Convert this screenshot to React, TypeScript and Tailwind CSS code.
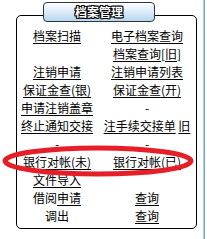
import React from 'react';

type Cell = React.ReactNode;

const U = ({ children }: { children: React.ReactNode }) => (
  <span className="underline underline-offset-[2px] decoration-black">{children}</span>
);

const rows: [Cell, Cell][] = [
  [<U>档案扫描</U>, <U>电子档案查询</U>],
  [null, <><U>档案查询</U>[<U>旧</U>]</>],
  [<U>注销申请</U>, <U>注销申请列表</U>],
  [<U>保证金查(银)</U>, <U>保证金查(开)</U>],
  [<U>申请注销盖章</U>, '-'],
  [<U>终止通知交接</U>, <><U>注手续交接单</U> <U>旧</U></>],
  ['-', '-'],
  [<U>银行对帐(未)</U>, <U>银行对帐(已)</U>],
  [<U>文件导入</U>, null],
  [<>借阅<U>申请</U></>, <U>查询</U>],
  ['调出', <U>查询</U>],
];

export default function App(): JSX.Element {
  return (
    <div className="relative h-[239px] w-[207px] overflow-hidden bg-white font-['Noto_Sans_CJK_SC','Noto_Sans_CJK_JP',sans-serif] text-[12px] text-black">
      <div className="absolute right-[2px] top-0 h-full w-[2px] bg-gradient-to-r from-[#cfe3f5] to-[#4f8fd2]" />

      <div className="pt-[2px]">
        <div className="relative z-10 ml-[43px] flex h-[20px] w-[112px] items-center justify-center rounded-[4px] border border-[#333] bg-gradient-to-b from-white to-[#b5d7f2]">
          <span className="text-[12px] font-bold leading-none text-white [text-shadow:1px_0_0_#000,-1px_0_0_#000,0_1px_0_#000,0_-1px_0_#000,1px_1px_0_#000,-1px_-1px_0_#000,1px_-1px_0_#000,-1px_1px_0_#000]">
            档案管理
          </span>
        </div>

        <div className="ml-[16px] mt-[-7px] h-[214px] w-[181px] rounded-[5px] border border-black pt-[11px]">
          <div className="grid grid-cols-[80px_100px] leading-[18px]">
            {rows.map(([l, r], i) => (
              <React.Fragment key={i}>
                <div className="h-[18px] whitespace-nowrap text-center">{l}</div>
                <div className="h-[18px] whitespace-nowrap text-center">{r}</div>
              </React.Fragment>
            ))}
          </div>
        </div>
      </div>

      <svg className="pointer-events-none absolute left-0 top-0" width="207" height="239">
        <ellipse cx="98" cy="161" rx="93" ry="13" fill="none" stroke="#e61e28" strokeWidth="5" />
      </svg>
    </div>
  );
}
